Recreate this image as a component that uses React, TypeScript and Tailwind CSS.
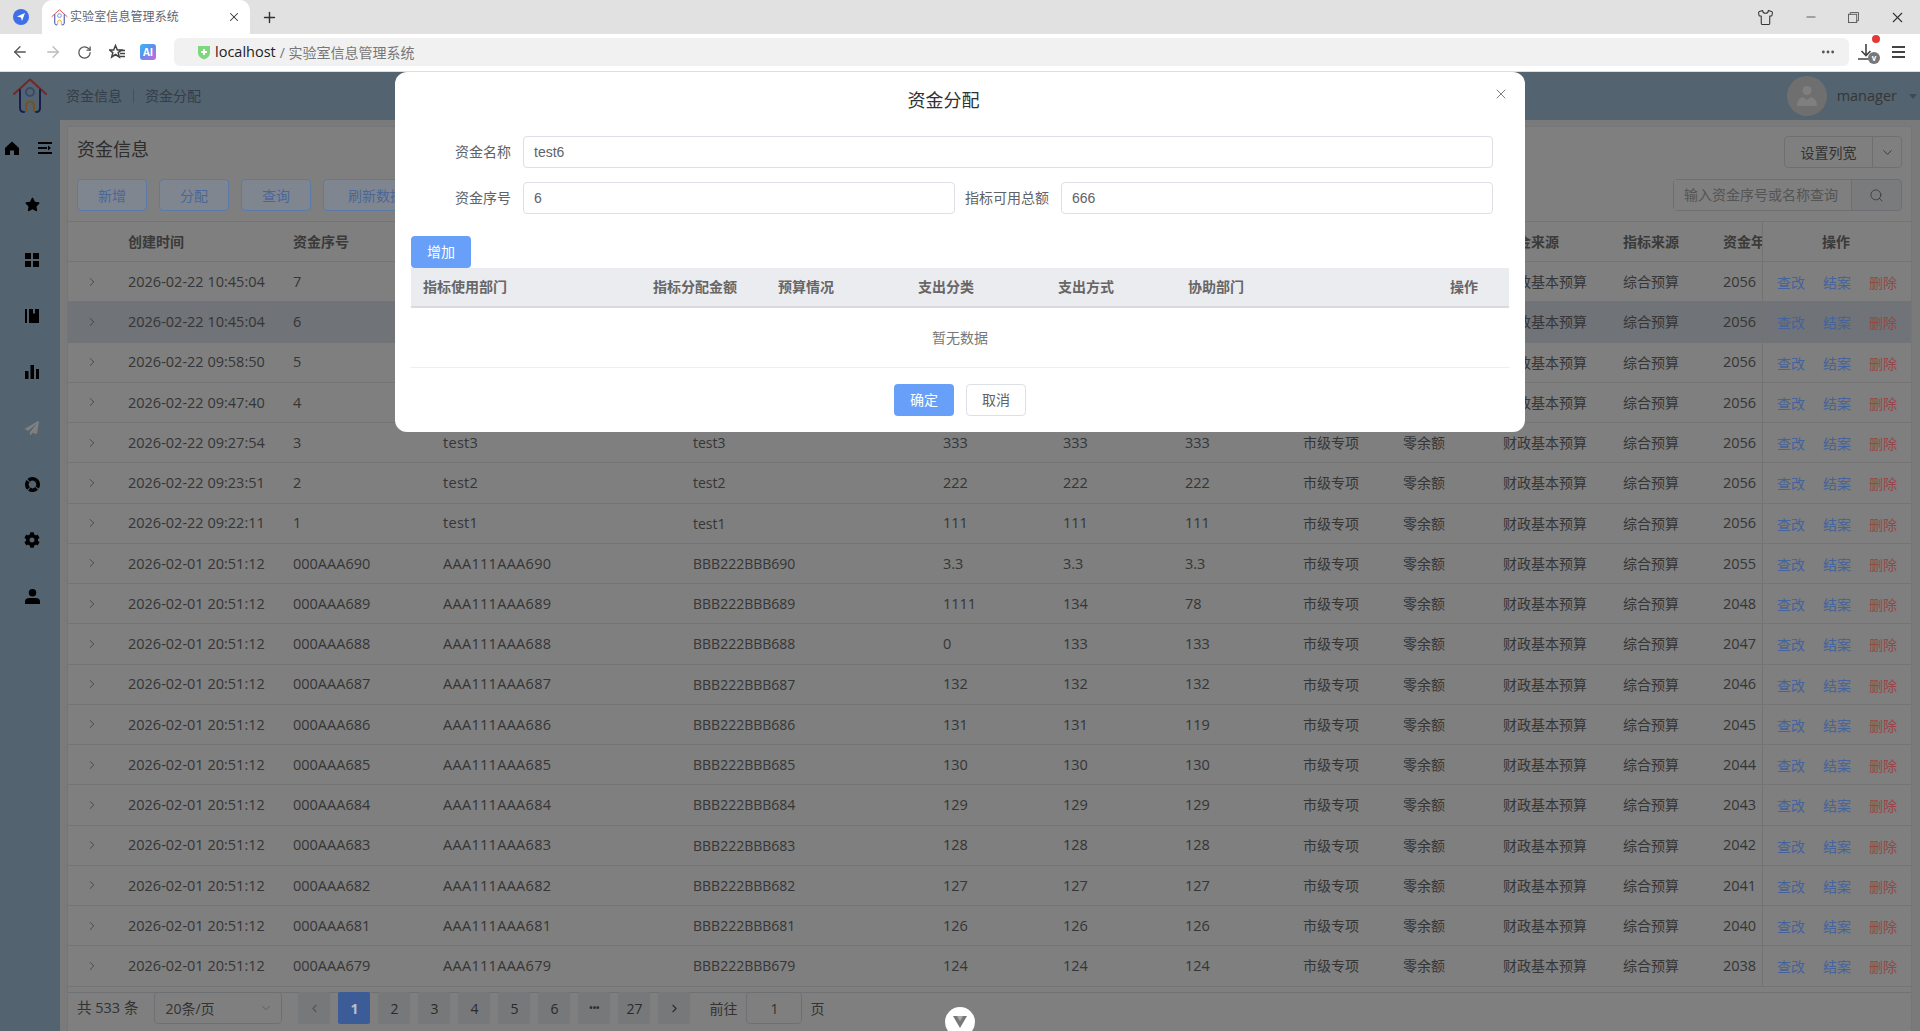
import { ArrowLeft, ArrowRight, ChevronDown, ChevronLeft, ChevronRight, Minus, MoreHorizontal, Plus, RotateCw, Search, Shirt, X } from "lucide-react";
import { FaCog, FaPaperPlane, FaStar } from "react-icons/fa";

const ROW_GRID =
  "grid grid-cols-[48px_165px_150px_250px_250px_120px_122px_118px_100px_100px_120px_100px_51px_150px]";
const DIALOG_GRID = "grid grid-cols-[230px_125px_140px_140px_130px_262px_71px]";

type Row = {
  time: string;
  no: string;
  name: string;
  code: string;
  a: string;
  b: string;
  c: string;
  year: string;
};

// the first four rows sit behind the dialog from the third column on
const rows: Row[] = [
  { time: "2026-02-22 10:45:04", no: "7", name: "", code: "", a: "", b: "", c: "", year: "2056" },
  { time: "2026-02-22 10:45:04", no: "6", name: "", code: "", a: "", b: "", c: "", year: "2056" },
  { time: "2026-02-22 09:58:50", no: "5", name: "", code: "", a: "", b: "", c: "", year: "2056" },
  { time: "2026-02-22 09:47:40", no: "4", name: "", code: "", a: "", b: "", c: "", year: "2056" },
  { time: "2026-02-22 09:27:54", no: "3", name: "test3", code: "test3", a: "333", b: "333", c: "333", year: "2056" },
  { time: "2026-02-22 09:23:51", no: "2", name: "test2", code: "test2", a: "222", b: "222", c: "222", year: "2056" },
  { time: "2026-02-22 09:22:11", no: "1", name: "test1", code: "test1", a: "111", b: "111", c: "111", year: "2056" },
  { time: "2026-02-01 20:51:12", no: "000AAA690", name: "AAA111AAA690", code: "BBB222BBB690", a: "3.3", b: "3.3", c: "3.3", year: "2055" },
  { time: "2026-02-01 20:51:12", no: "000AAA689", name: "AAA111AAA689", code: "BBB222BBB689", a: "1111", b: "134", c: "78", year: "2048" },
  { time: "2026-02-01 20:51:12", no: "000AAA688", name: "AAA111AAA688", code: "BBB222BBB688", a: "0", b: "133", c: "133", year: "2047" },
  { time: "2026-02-01 20:51:12", no: "000AAA687", name: "AAA111AAA687", code: "BBB222BBB687", a: "132", b: "132", c: "132", year: "2046" },
  { time: "2026-02-01 20:51:12", no: "000AAA686", name: "AAA111AAA686", code: "BBB222BBB686", a: "131", b: "131", c: "119", year: "2045" },
  { time: "2026-02-01 20:51:12", no: "000AAA685", name: "AAA111AAA685", code: "BBB222BBB685", a: "130", b: "130", c: "130", year: "2044" },
  { time: "2026-02-01 20:51:12", no: "000AAA684", name: "AAA111AAA684", code: "BBB222BBB684", a: "129", b: "129", c: "129", year: "2043" },
  { time: "2026-02-01 20:51:12", no: "000AAA683", name: "AAA111AAA683", code: "BBB222BBB683", a: "128", b: "128", c: "128", year: "2042" },
  { time: "2026-02-01 20:51:12", no: "000AAA682", name: "AAA111AAA682", code: "BBB222BBB682", a: "127", b: "127", c: "127", year: "2041" },
  { time: "2026-02-01 20:51:12", no: "000AAA681", name: "AAA111AAA681", code: "BBB222BBB681", a: "126", b: "126", c: "126", year: "2040" },
  { time: "2026-02-01 20:51:12", no: "000AAA679", name: "AAA111AAA679", code: "BBB222BBB679", a: "124", b: "124", c: "124", year: "2038" },
];

function HouseLogo({ className }: { className: string }) {
  return (
    <svg viewBox="0 0 34 36" fill="none" className={className}>
      <path d="M1 16 17 1.500 33 16" stroke="#e0524c" strokeWidth="2" strokeLinecap="round" strokeLinejoin="round" />
      <path d="M7 12v18q0 4 4 4" stroke="#2f3f9e" strokeWidth="2" strokeLinecap="round" />
      <path d="M27 12v18q0 4-4 4" stroke="#2f3f9e" strokeWidth="2" strokeLinecap="round" />
      <circle cx="17" cy="14" r="4" stroke="#6f93d8" strokeWidth="2" />
      <path d="M13 34v-6q0-4.500 4-4.500t4 4.500v6" stroke="#f0a33c" strokeWidth="2" />
    </svg>
  );
}

function BrowserBar() {
  return (
    <div className="shrink-0 font-['Open_Sans','Noto_Sans_CJK_SC',sans-serif]">
      <div className="flex h-[34px] items-end bg-[#e1e1e1]">
        <div className="flex h-[34px] w-[42px] items-center justify-center">
          <svg viewBox="0 0 16 16" className="h-4 w-4">
            <circle cx="8" cy="8" r="8" fill="#3d6fe8" />
            <path d="M12 4 9 12 8 8.500 4 7.500Z" fill="#fff" />
          </svg>
        </div>
        <div className="flex h-[34px] w-[208px] items-center rounded-t-[10px] bg-white pl-[9px] pr-[9px]">
          <HouseLogo className="h-[17px] w-[17px] shrink-0" />
          <span className="ml-[2px] text-[12px] tracking-[0.1px] text-[#5c6672]">实验室信息管理系统</span>
          <X size={14} strokeWidth={1.75} className="ml-auto text-[#333]" />
        </div>
        <div className="flex h-[34px] w-[38px] items-center justify-center text-[#333]">
          <Plus size={17} strokeWidth={2} />
        </div>
        <div className="ml-auto flex h-[34px] items-center text-[#333]">
          <Shirt size={17} strokeWidth={1.5} className="mr-[30px]" />
          <Minus size={14} strokeWidth={1.25} className="mr-[30px]" />
          <svg viewBox="0 0 12 12" fill="none" stroke="#555" className="mr-[30px] h-[11px] w-[11px]">
            <rect x=".5" y="2.500" width="9" height="9" />
            <path d="M2.500 2.500v-2h9v9h-2" />
          </svg>
          <X size={17} strokeWidth={1.5} className="mr-[14px]" />
        </div>
      </div>
      <div className="flex h-[38px] items-center border-b border-[#dedede] bg-white pb-[1px]">
        <ArrowLeft size={18} strokeWidth={1.75} className="ml-[11px] text-[#555]" />
        <ArrowRight size={18} strokeWidth={1.75} className="ml-[15px] text-[#bbb]" />
        <RotateCw size={15} strokeWidth={2} className="ml-[15px] text-[#555]" />
        <svg viewBox="0 0 16 16" className="ml-[17px] h-[16px] w-[16px]">
          <path d="M6.500 1.500 8.300 6h4.200L9.200 8.600 10.300 13 6.500 10.500 2.700 13 3.800 8.600.5 6h4.200Z" fill="none" stroke="#444" strokeWidth="1.500" />
          <path d="M10 6.500h6M11 9.500h5M11 12.500h5" stroke="#444" strokeWidth="1.500" />
        </svg>
        <div className="ml-[15px] flex h-[16px] w-[16px] items-center justify-center rounded-[3px] bg-gradient-to-br from-[#38b6f2] via-[#5d8cf0] to-[#d05ad8] text-[10px] font-bold leading-none text-white">
          AI
        </div>
        <div className="ml-[18px] flex h-[28px] w-[1675px] items-center rounded-[6px] bg-[#f1f1f1] pl-[23px] pr-[13px]">
          <svg viewBox="0 0 14 16" className="h-[16px] w-[14px]">
            <path d="M1 2h12v7q0 4-6 6.500Q1 13 1 9Z" fill="#7fd67f" />
            <path d="M7 5v6M4 8h6" stroke="#fff" strokeWidth="1.800" />
          </svg>
          <span className="ml-[4px] text-[14.5px] text-[#222]">localhost</span>
          <span className="ml-[4px] text-[14px] text-[#777]">/ 实验室信息管理系统</span>
          <MoreHorizontal size={16} strokeWidth={2.25} className="ml-auto text-[#555]" />
        </div>
        <div className="relative ml-[8px] h-[18px] w-[20px] text-[#555]">
          <svg viewBox="0 0 20 18" fill="none" stroke="#444" strokeWidth="1.600" className="h-[18px] w-[20px]">
            <path d="M9 1v11M4.500 8 9 12.500 13.500 8M1 16h11" />
          </svg>
          <span className="absolute right-[-3px] top-[-8px] h-[8px] w-[8px] rounded-full bg-[#e53935]" />
          <span className="absolute bottom-[-3px] right-[-3px] flex h-[12px] w-[12px] items-center justify-center rounded-full bg-[#777] text-[8px] font-bold leading-none text-white">
            v
          </span>
        </div>
        <div className="ml-[15px] flex w-[13px] flex-col gap-[3px]">
          <span className="h-[2px] bg-[#444]" />
          <span className="h-[2px] bg-[#444]" />
          <span className="h-[2px] bg-[#444]" />
        </div>
      </div>
    </div>
  );
}

function Sidebar() {
  const cell = "flex h-[56px] items-center justify-center pl-[4px]";
  return (
    <aside className="w-[60px] shrink-0 bg-[#a6c6e0] text-black">
      <div className="flex h-[56px] items-center pl-[5px]">
        <svg viewBox="0 0 14 14" className="h-[14px] w-[14px]">
          <path d="M7 .500 14 7v7H9V9.500H5V14H0V7Z" fill="#000" />
        </svg>
        <svg viewBox="0 0 14 12" className="ml-[19px] h-[12px] w-[14px]">
          <path d="M0 0h14v2H0zM0 5h9v2H0zM10 3.500 13 6l-3 2.500zM0 10h14v2H0z" fill="#000" />
        </svg>
      </div>
      <div className={cell}>
        <FaStar size={15} />
      </div>
      <div className={cell}>
        <svg viewBox="0 0 14 14" className="h-[14px] w-[14px]">
          <path d="M0 0h6v6H0zM8 0h6v6H8zM0 8h6v6H0zM8 8h6v6H8z" fill="#000" />
        </svg>
      </div>
      <div className={cell}>
        <svg viewBox="0 0 14 14" className="h-[14px] w-[14px]">
          <path d="M0 0h2v14H0zM4 0h4v4l1 1 1-1V0h4v14H4z" fill="#000" />
        </svg>
      </div>
      <div className={cell}>
        <svg viewBox="0 0 14 14" className="h-[14px] w-[14px]">
          <path d="M0 6h3.500v8H0zM5.500 0H9v14H5.500zM11 4h3v10h-3z" fill="#000" />
        </svg>
      </div>
      <div className={cell}>
        <FaPaperPlane size={14} className="text-white" />
      </div>
      <div className={cell}>
        <svg viewBox="0 0 14 14" className="h-[15px] w-[15px]">
          <circle cx="7" cy="7" r="5.250" fill="none" stroke="#000" strokeWidth="3.500" strokeDasharray="7.250 1" transform="rotate(-49 7 7)" />
        </svg>
      </div>
      <div className={cell}>
        <FaCog size={16} />
      </div>
      <div className={cell}>
        <svg viewBox="0 0 14 14" className="h-[15px] w-[15px]">
          <circle cx="7" cy="3.500" r="3.500" fill="#000" />
          <path d="M0 14v-2q0-3.500 4-3.500h6q4 0 4 3.500v2z" fill="#000" />
        </svg>
      </div>
    </aside>
  );
}

function TableRow({ row, active, covered }: { row: Row; active: boolean; covered: boolean }) {
  const cell = "overflow-hidden whitespace-nowrap pl-3";
  const latin = `${cell} text-[14.5px]`;
  return (
    <div
      className={`${ROW_GRID} h-[40.25px] items-center border-b border-[#e8e8e8] text-[14px] text-[#6c6c6c] ${
        active ? "bg-[#e0e6ee]" : "bg-white"
      }`}
    >
      <div className="flex justify-center">
        <ChevronRight size={14} strokeWidth={1} className="text-[#444]" />
      </div>
      <div className={latin}>{row.time}</div>
      <div className={latin}>{row.no}</div>
      <div className={`${latin} tracking-[0.3px]`}>{row.name}</div>
      <div className={cell}>{row.code}</div>
      <div className={latin}>{row.a}</div>
      <div className={latin}>{row.b}</div>
      <div className={latin}>{row.c}</div>
      <div className={cell}>{covered ? "" : "市级专项"}</div>
      <div className={cell}>{covered ? "" : "零余额"}</div>
      <div className={cell}>财政基本预算</div>
      <div className={cell}>综合预算</div>
      <div className={latin}>{row.year}</div>
      <div className="flex h-full items-center gap-[18px] border-l border-[#e4e4e4] pl-[14px] pt-[2px]">
        <span className="relative z-10 text-[#45639c]">查改</span>
        <span className="relative z-10 text-[#45639c]">结案</span>
        <span className="relative z-10 text-[#964646]">删除</span>
      </div>
    </div>
  );
}

function DataTable() {
  const head = "overflow-hidden whitespace-nowrap pl-3";
  return (
    <div>
      <div className={`${ROW_GRID} h-[41px] items-center border-y border-[#e8e8e8] bg-white text-[14px] font-bold text-[#757575]`}>
        <div />
        <div className={head}>创建时间</div>
        <div className={head}>资金序号</div>
        <div className="col-span-7" />
        <div className={head}>资金来源</div>
        <div className={head}>指标来源</div>
        <div className={head}>资金年度</div>
        <div className="flex h-full items-center justify-center border-l border-[#e4e4e4] pr-[3px]">操作</div>
      </div>
      {rows.map((row, i) => (
        <TableRow key={i} row={row} active={i === 1} covered={i < 4} />
      ))}
    </div>
  );
}

function Pagination() {
  const page = "flex h-[32px] w-[32px] items-center justify-center rounded-[2px] bg-[#eef0f3] text-[#555]";
  return (
    <div className="mt-[5px] flex h-[32px] items-center border-t border-[#dfe3ea] pl-[9px] text-[14px] text-[#666]">
      <span className="text-[14.5px]">共 533 条</span>
      <div className="ml-[16px] flex h-[32px] w-[128px] items-center justify-between rounded-[4px] border border-[#dcdfe6] pl-[10px] pr-[8px]">
        <span>20条/页</span>
        <ChevronDown size={14} strokeWidth={1.25} className="text-[#aaa]" />
      </div>
      <div className="ml-[16px] flex gap-[8px]">
        <div className={`${page} w-[30px] text-[#aaa]`}>
          <ChevronLeft size={13} />
        </div>
        <div className="relative z-10 flex h-[32px] w-[32px] items-center justify-center rounded-[2px] bg-[#3c5c98] font-bold text-[#b8c0d0]">1</div>
        {["2", "3", "4", "5", "6", "•••", "27"].map((p) => (
          <div key={p} className={`${page} ${p === "•••" ? "text-[9px] font-bold" : ""}`}>
            {p}
          </div>
        ))}
        <div className={page}>
          <ChevronRight size={13} />
        </div>
      </div>
      <span className="ml-[19px]">前往</span>
      <div className="ml-[9px] flex h-[32px] w-[56px] items-center justify-center rounded-[4px] border border-[#dcdfe6]">1</div>
      <span className="ml-[8px]">页</span>
    </div>
  );
}

function MainPanel() {
  return (
    <main className="min-w-0 flex-1 bg-[#f5f5f5] pl-[7px] pr-[8px] pt-[6px]">
      <div className="border border-[#ececec] bg-white pb-[8px]">
        <div className="flex items-start justify-between pl-[9px] pr-[9px] pt-[9px]">
          <h1 className="text-[18px] leading-[26px] text-[#5a5a5a]">资金信息</h1>
          <div className="flex h-[32px] w-[118px] items-center rounded-[4px] border border-[#dcdfe6] text-[14px] text-[#666]">
            <span className="w-[87px] text-center">设置列宽</span>
            <span className="flex h-full flex-1 items-center justify-center border-l border-[#dcdfe6] text-[#555]">
              <ChevronDown size={15} strokeWidth={1.25} />
            </span>
          </div>
        </div>
        <div className="mb-[10px] mt-[11px] flex items-center justify-between pl-[9px] pr-[9px]">
          <div className="flex gap-[12px] text-[14px]">
            {["新增", "分配", "查询", "刷新数据"].map((label) => (
              <button
                key={label}
                className={`relative z-10 h-[32px] rounded-[4px] border border-[#5a7aa8] bg-[#808690] text-center text-[#4a6799] ${
                  label === "刷新数据" ? "px-[24px]" : "px-[20px]"
                }`}
              >
                {label}
              </button>
            ))}
          </div>
          <div className="flex h-[32px] w-[229px] items-center rounded-[4px] border border-[#dcdfe6] bg-[#f5f7fa] text-[14px] text-[#aaa]">
            <span className="w-[177px] bg-white pl-[10px] leading-[30px]">输入资金序号或名称查询</span>
            <span className="flex h-full flex-1 items-center justify-center border-l border-[#dcdfe6] text-[#666]">
              <Search size={15} strokeWidth={1.25} />
            </span>
          </div>
        </div>
        <DataTable />
        <Pagination />
      </div>
    </main>
  );
}

function AllocateDialog() {
  const input = "flex h-[32px] items-center rounded-[4px] border border-[#dcdfe6] bg-white pl-[10px] text-[14px] text-[#606266]";
  const headCell = "pl-3";
  return (
    <section className="absolute left-[395px] top-0 z-20 w-[1130px] rounded-[12px] bg-white font-['Liberation_Sans','Noto_Sans_CJK_SC',sans-serif] text-[14px] text-[#606266]">
      <h2 className="h-[64px] pr-[33px] pt-[17px] text-center text-[18px] leading-[24px] text-[#303133]">资金分配</h2>
      <X size={16} strokeWidth={1.25} className="absolute right-[16px] top-[14px] text-[#666]" />
      <div className="flex pl-[60px] pr-[32px]">
        <span className="w-[56px] leading-[32px]">资金名称</span>
        <div className={`${input} ml-[12px] flex-1`}>test6</div>
      </div>
      <div className="mt-[14px] flex pl-[60px] pr-[32px]">
        <span className="w-[56px] leading-[32px]">资金序号</span>
        <div className={`${input} ml-[12px] w-[432px]`}>6</div>
        <span className="ml-[10px] w-[84px] leading-[32px]">指标可用总额</span>
        <div className={`${input} ml-[12px] flex-1`}>666</div>
      </div>
      <div className="mx-[16px] mt-[22px]">
        <button className="h-[32px] w-[60px] rounded-[4px] bg-[#689ff8] text-white">增加</button>
        <div className={`${DIALOG_GRID} h-[40px] items-center border-b-2 border-[#d8dade] bg-[#ebecf0] pt-[1px] font-bold text-[#666]`}>
          <div className={headCell}>指标使用部门</div>
          <div className={headCell}>指标分配金额</div>
          <div className={headCell}>预算情况</div>
          <div className={headCell}>支出分类</div>
          <div className={headCell}>支出方式</div>
          <div className={headCell}>协助部门</div>
          <div className={headCell}>操作</div>
        </div>
        <div className="flex h-[60px] items-center justify-center border-b border-[#ebeef5] pt-[1px] text-[#777]">暂无数据</div>
      </div>
      <div className="mt-[16px] flex justify-center gap-[12px] pb-[16px]">
        <button className="h-[32px] w-[60px] rounded-[4px] bg-[#689ff8] text-white">确定</button>
        <button className="h-[32px] w-[60px] rounded-[4px] border border-[#dcdfe6] bg-white text-[#606266]">取消</button>
      </div>
    </section>
  );
}

export default function App() {
  return (
    <div className="flex h-screen flex-col overflow-hidden">
      <BrowserBar />
      <div className="relative flex min-h-0 flex-1 flex-col font-['Open_Sans','Noto_Sans_CJK_SC',sans-serif]">
        <header className="flex h-[48px] shrink-0 items-center bg-[#a6c6e0] text-[14px] text-[#667c90]">
          <HouseLogo className="ml-[13px] h-[36px] w-[34px]" />
          <span className="ml-[19px] -mt-px">资金信息</span>
          <span className="ml-[11px] h-[14px] w-px bg-[#8aa6bf]" />
          <span className="ml-[11px] -mt-px">资金分配</span>
          <div className="ml-auto flex items-center">
            <div className="flex h-[40px] w-[40px] items-center justify-center rounded-full bg-[#dedede]">
              <svg viewBox="0 0 24 24" className="h-[24px] w-[24px]">
                <circle cx="12" cy="6.500" r="4.500" fill="#fff" />
                <path d="M2 22c0-6 3-8 6-9l4 3 4-3c3 1 6 3 6 9z" fill="#fff" />
              </svg>
            </div>
            <span className="ml-[10px] -mt-px text-[14.5px] text-[#6d6d6d]">manager</span>
            <span className="ml-[12px] mr-[3px] h-0 w-0 border-x-[4px] border-t-[5px] border-x-transparent border-t-[#7c96ad]" />
          </div>
        </header>
        <div className="flex min-h-0 flex-1">
          <Sidebar />
          <MainPanel />
        </div>
        <div className="absolute inset-0 bg-black/50" />
        <AllocateDialog />
        <div className="absolute bottom-[-6px] left-[945px] z-20 flex h-[30px] w-[30px] justify-center rounded-full bg-white pt-[9px]">
          <svg viewBox="0 0 14 12" className="h-[12px] w-[14px]">
            <path d="M0 0h14L7 12Z" fill="#777" />
            <path d="M4 0h6L7 5.500Z" fill="#aaa" />
          </svg>
        </div>
      </div>
    </div>
  );
}
